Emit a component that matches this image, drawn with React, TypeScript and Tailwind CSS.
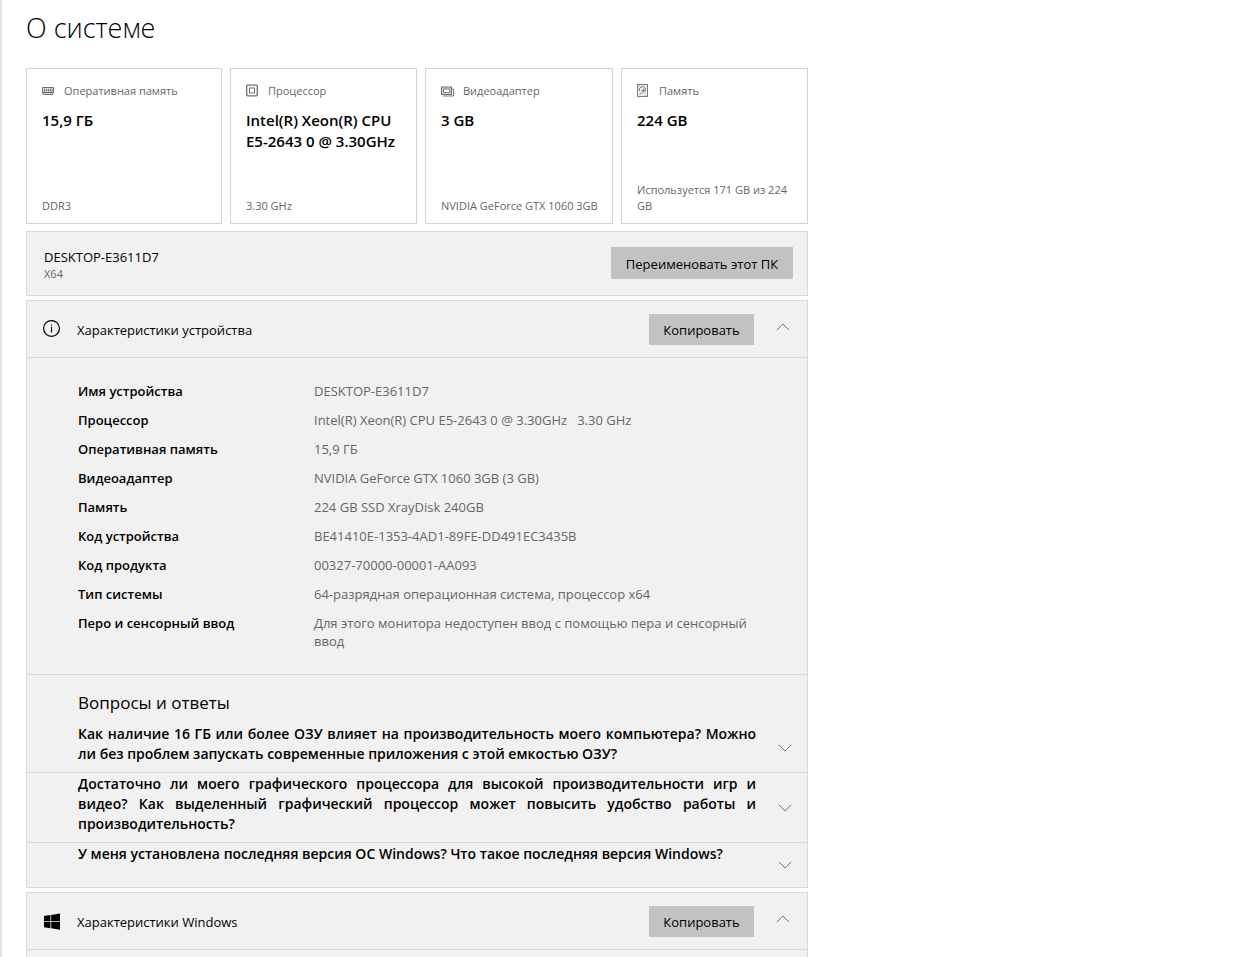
import React, { useState } from 'react';

const RamIcon = () => (
  <svg className="h-4 w-3 shrink-0" viewBox="0 0 12 16" fill="none" stroke="#6f6f6f" aria-hidden="true">
    <path d="M.5 4.5h11v5.5l-.8.5v1H1.3v-1L.5 10z" fill="#d4d4d4" />
    <path d="M2.5 6v2.5M4.5 6v2.5M6.5 6v2.5M8.5 6v2.5M10 6v2.5" strokeWidth={0.9} />
    <path d="M1 9.5h10" />
  </svg>
);

const CpuIcon = () => (
  <svg className="h-4 w-3 shrink-0" viewBox="0 0 12 16" fill="none" stroke="#6f6f6f" aria-hidden="true">
    <rect x="0.7" y="2.2" width="10.6" height="10.6" rx="1" strokeWidth={1.3} />
    <rect x="3.5" y="5" width="5" height="5" />
  </svg>
);

const GpuIcon = () => (
  <svg className="h-4 w-3 shrink-0 overflow-visible" viewBox="0 0 12 16" fill="none" stroke="#6f6f6f" aria-hidden="true">
    <rect x="0.5" y="4" width="10" height="7.5" fill="#d4d4d4" />
    <rect x="2.5" y="6" width="6" height="3.5" fill="#fff" strokeWidth={0.8} />
    <path d="M2 13h10.5V6H11" strokeWidth={0.9} />
  </svg>
);

const DiskIcon = () => (
  <svg className="h-4 w-3 shrink-0" viewBox="0 0 12 16" fill="none" stroke="#6f6f6f" strokeWidth={0.9} aria-hidden="true">
    <rect x="0.5" y="1.5" width="10" height="12" fill="#ececec" />
    <path d="M2.6 8A3.1 3.1 0 1 1 6.5 9.6" />
    <path d="M6.8 5.5v2.2L3 11.5M4.5 7.5h2.3" />
    <path d="M2 3h.5M8.5 12h.5" />
  </svg>
);

const InfoIcon = () => (
  <svg className="h-[18px] w-[18px]" viewBox="0 0 18 18" fill="none" stroke="#000" aria-hidden="true">
    <circle cx="8.5" cy="8.5" r="7.9" strokeWidth={1.2} />
    <path d="M8.5 7V12.5M8.5 4.6v1.2" strokeWidth={1.1} />
  </svg>
);

const WindowsIcon = () => (
  <svg className="h-[18px] w-[18px]" viewBox="0 0 18 18" fill="#000" aria-hidden="true">
    <path d="M1 4.1 7.4 3.1V9.2H1zM8.2 3 17 1.6v7.6H8.2zM1 10h6.4v6.2L1 15.3zM8.2 10H17v7.7l-8.8-1.4z" />
  </svg>
);

const Chevron = ({ up = false }: { up?: boolean }) => (
  <svg className="h-2 w-[14px]" viewBox="0 0 14 8" fill="none" stroke="#777" aria-hidden="true">
    <path d={up ? 'M.8 7.2 7 1l6.2 6.2' : 'M.8.8 7 7 13.2.8'} />
  </svg>
);

const cards = [
  { icon: <RamIcon />, label: 'Оперативная память', value: '15,9 ГБ', note: 'DDR3' },
  { icon: <CpuIcon />, label: 'Процессор', value: 'Intel(R) Xeon(R) CPU E5-2643 0 @ 3.30GHz', note: '3.30 GHz' },
  { icon: <GpuIcon />, label: 'Видеоадаптер', value: '3 GB', note: 'NVIDIA GeForce GTX 1060 3GB' },
  { icon: <DiskIcon />, label: 'Память', value: '224 GB', note: 'Используется 171 GB из 224 GB' },
];

const specs = [
  ['Имя устройства', 'DESKTOP-E3611D7'],
  ['Процессор', 'Intel(R) Xeon(R) CPU E5-2643 0 @ 3.30GHz \u00a0 3.30 GHz'],
  ['Оперативная память', '15,9 ГБ'],
  ['Видеоадаптер', 'NVIDIA GeForce GTX 1060 3GB (3 GB)'],
  ['Память', '224 GB SSD XrayDisk 240GB'],
  ['Код устройства', 'BE41410E-1353-4AD1-89FE-DD491EC3435B'],
  ['Код продукта', '00327-70000-00001-AA093'],
  ['Тип системы', '64-разрядная операционная система, процессор x64'],
  ['Перо и сенсорный ввод', 'Для этого монитора недоступен ввод с помощью пера и сенсорный ввод'],
];

const questions = [
  'Как наличие 16 ГБ или более ОЗУ влияет на производительность моего компьютера? Можно ли без проблем запускать современные приложения с этой емкостью ОЗУ?',
  'Достаточно ли моего графического процессора для высокой производительности игр и видео? Как выделенный графический процессор может повысить удобство работы и производительность?',
  'У меня установлена последняя версия ОС Windows? Что такое последняя версия Windows?',
];

type HeaderProps = {
  icon: React.ReactNode;
  title: string;
  open: boolean;
  onToggle: () => void;
};

const SectionHeader = ({ icon, title, open, onToggle }: HeaderProps) => (
  <div className="flex h-[57px] shrink-0 items-center border-b border-[#d9d9d9] pr-[17px] pl-4">
    {icon}
    <h2 className="ml-4 flex-1 pt-1 text-[13px]">{title}</h2>
    <button className="h-[31px] w-[105px] bg-[#c2c2c2] pt-1 text-[13px] hover:bg-[#b5b5b5]">Копировать</button>
    <button className="ml-[22px] pb-1" aria-label={title} aria-expanded={open} onClick={onToggle}>
      <Chevron up={open} />
    </button>
  </div>
);

const App = () => {
  const [deviceOpen, setDeviceOpen] = useState(true);
  const [windowsOpen, setWindowsOpen] = useState(true);

  return (
    <main className="flex h-screen flex-col overflow-hidden border-l-2 border-[#e3e3e3] bg-white pl-6 font-['Open_Sans','Noto_Sans',sans-serif] text-black">
      <h1 className="mt-2 mb-5 text-[27px] leading-10 font-light">О системе</h1>
      <div className="flex w-full max-w-[782px] flex-1 flex-col">
        <div className="grid grid-cols-[196fr_187fr_188fr_187fr] gap-2">
          {cards.map((card) => (
            <div key={card.label} className="flex min-h-[156px] min-w-0 flex-col border border-[#d4d4d4] pt-[14px] pr-1 pb-[9px] pl-[15px]">
              <div className="flex items-center gap-[10px] text-[11px] leading-4 text-[#666]">
                {card.icon}
                {card.label}
              </div>
              <p className="mt-[11px] text-[15px] leading-[21px] font-semibold">{card.value}</p>
              <p className="mt-auto text-[11px] leading-4 text-[#666]">{card.note}</p>
            </div>
          ))}
        </div>

        <div className="mt-[7px] flex h-[65px] shrink-0 items-center justify-between border border-[#d9d9d9] bg-[#f1f1f1] pr-[14px] pb-0.5 pl-[17px]">
          <div className="pt-1">
            <p className="text-[13px] leading-[18px]">DESKTOP-E3611D7</p>
            <p className="text-[11px] leading-4 text-[#666]">X64</p>
          </div>
          <button className="h-8 w-[182px] bg-[#c2c2c2] pt-1 text-[13px] hover:bg-[#b5b5b5]">Переименовать этот ПК</button>
        </div>

        <section className="mt-1 border border-[#d9d9d9] bg-[#f1f1f1]">
          <SectionHeader
            icon={<InfoIcon />}
            title="Характеристики устройства"
            open={deviceOpen}
            onToggle={() => setDeviceOpen(!deviceOpen)}
          />
          {deviceOpen && (
            <>
              <div className="border-b border-[#d9d9d9] py-6 pr-10 pl-[51px]">
                <table className="w-full text-[13px] leading-[18px]">
                  <tbody>
                    {specs.map(([name, value]) => (
                      <tr key={name} className="group align-top">
                        <th scope="row" className="w-[236px] pb-[11px] text-left font-semibold group-last:pb-0">{name}</th>
                        <td className="pb-[11px] text-[#666] group-last:pb-0">{value}</td>
                      </tr>
                    ))}
                  </tbody>
                </table>
              </div>
              <h3 className="mt-[15px] mb-2 pl-[51px] text-[17px] leading-[25px]">Вопросы и ответы</h3>
              <ul>
                {questions.map((question) => (
                  <li key={question} className="border-b border-[#d9d9d9] last:border-b-0">
                    <button className="flex min-h-[44px] w-full items-center justify-between pr-[15px] pl-[51px]">
                      <span className="w-[678px] self-start pt-px pb-2 text-justify text-sm leading-5 font-semibold">
                        {question}
                      </span>
                      <Chevron />
                    </button>
                  </li>
                ))}
              </ul>
            </>
          )}
        </section>

        <section className="mt-1 flex-1 border border-b-0 border-[#d9d9d9] bg-[#f1f1f1]">
          <SectionHeader
            icon={<WindowsIcon />}
            title="Характеристики Windows"
            open={windowsOpen}
            onToggle={() => setWindowsOpen(!windowsOpen)}
          />
        </section>
      </div>
    </main>
  );
};

export default App;
